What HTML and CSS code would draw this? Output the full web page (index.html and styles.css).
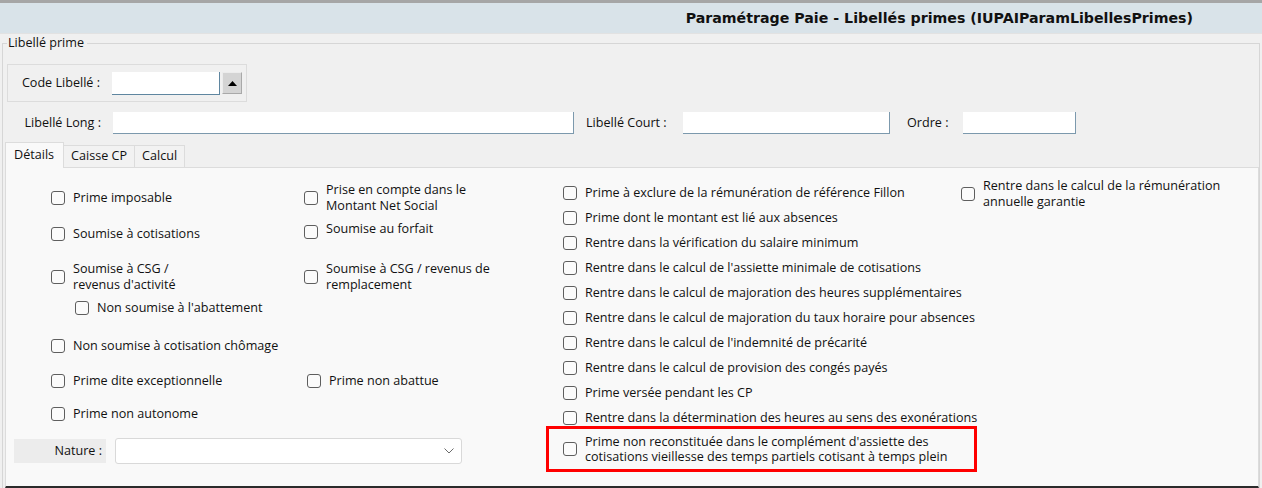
FILE: index.html
```html
<!DOCTYPE html>
<html lang="fr">
<head>
    <meta charset="UTF-8">
    <meta name="viewport" content="width=device-width, initial-scale=1.0">
    <title>Paramétrage Paie - Libellés primes</title>
    <link rel="stylesheet" href="styles.css">
</head>
<body>
    <div class="title-bar">
        <span class="title">Paramétrage Paie - Libellés primes (IUPAIParamLibellesPrimes)</span>
    </div>

    <fieldset class="group">
        <legend>Libellé prime</legend>

        <div class="code-box">
            <label class="lbl" for="code">Code Libellé :</label>
            <input type="text" id="code" class="field field-code">
            <button class="spin" type="button">
                <svg width="9" height="5" viewBox="0 0 9 5"><path d="M0 5 L4.5 0 L9 5 Z" fill="#000"/></svg>
            </button>
        </div>

        <div class="field-row">
            <label class="lbl" for="long">Libellé Long :</label>
            <input type="text" id="long" class="field field-long">
            <label class="lbl-court" for="court">Libellé Court :</label>
            <input type="text" id="court" class="field field-court">
            <label class="lbl-ordre" for="ordre">Ordre :</label>
            <input type="text" id="ordre" class="field field-ordre">
        </div>

        <div class="tabs">
            <div class="tab active">Détails</div>
            <div class="tab">Caisse CP</div>
            <div class="tab">Calcul</div>
        </div>

        <div class="panel">
            <!-- left block : two columns of options + nature -->
            <div class="left">
                <div class="opt-row row-a">
                    <div class="cell">
                        <label class="opt"><input type="checkbox" class="cb"><span>Prime imposable</span></label>
                    </div>
                    <div class="cell">
                        <label class="opt"><input type="checkbox" class="cb"><span>Prise en compte dans le<br>Montant Net Social</span></label>
                    </div>
                </div>

                <div class="opt-row row-b">
                    <div class="cell">
                        <label class="opt"><input type="checkbox" class="cb"><span>Soumise à cotisations</span></label>
                    </div>
                    <div class="cell">
                        <label class="opt opt-top"><input type="checkbox" class="cb"><span>Soumise au forfait</span></label>
                    </div>
                </div>

                <div class="opt-row row-c">
                    <div class="cell cell-stack">
                        <label class="opt"><input type="checkbox" class="cb"><span>Soumise à CSG /<br>revenus d'activité</span></label>
                        <label class="opt opt-sub"><input type="checkbox" class="cb"><span>Non soumise à l'abattement</span></label>
                    </div>
                    <div class="cell">
                        <label class="opt"><input type="checkbox" class="cb"><span>Soumise à CSG / revenus de<br>remplacement</span></label>
                    </div>
                </div>

                <div class="opt-row row-d">
                    <div class="cell">
                        <label class="opt"><input type="checkbox" class="cb"><span>Non soumise à cotisation chômage</span></label>
                    </div>
                </div>

                <div class="opt-row row-e">
                    <div class="cell">
                        <label class="opt"><input type="checkbox" class="cb"><span>Prime dite exceptionnelle</span></label>
                    </div>
                    <div class="cell cell-shift">
                        <label class="opt"><input type="checkbox" class="cb"><span>Prime non abattue</span></label>
                    </div>
                </div>

                <div class="opt-row row-f">
                    <div class="cell">
                        <label class="opt"><input type="checkbox" class="cb"><span>Prime non autonome</span></label>
                    </div>
                </div>

                <div class="nature">
                    <label class="nature-lbl" for="nature">Nature :</label>
                    <div class="select-wrap">
                        <select id="nature" class="select"><option></option></select>
                        <svg class="chevron" width="10" height="6" viewBox="0 0 10 6"><path d="M0.5 0.5 L5 5 L9.5 0.5" fill="none" stroke="#6b6b6b" stroke-width="1"/></svg>
                    </div>
                </div>
            </div>

            <!-- right block -->
            <div class="right">
                <div class="cols">
                    <div class="list">
                        <label class="opt"><input type="checkbox" class="cb"><span>Prime à exclure de la rémunération de référence Fillon</span></label>
                        <label class="opt"><input type="checkbox" class="cb"><span>Prime dont le montant est lié aux absences</span></label>
                        <label class="opt"><input type="checkbox" class="cb"><span>Rentre dans la vérification du salaire minimum</span></label>
                        <label class="opt"><input type="checkbox" class="cb"><span>Rentre dans le calcul de l'assiette minimale de cotisations</span></label>
                        <label class="opt"><input type="checkbox" class="cb"><span>Rentre dans le calcul de majoration des heures supplémentaires</span></label>
                        <label class="opt"><input type="checkbox" class="cb"><span>Rentre dans le calcul de majoration du taux horaire pour absences</span></label>
                        <label class="opt"><input type="checkbox" class="cb"><span>Rentre dans le calcul de l'indemnité de précarité</span></label>
                        <label class="opt"><input type="checkbox" class="cb"><span>Rentre dans le calcul de provision des congés payés</span></label>
                        <label class="opt"><input type="checkbox" class="cb"><span>Prime versée pendant les CP</span></label>
                        <label class="opt"><input type="checkbox" class="cb"><span>Rentre dans la détermination des heures au sens des exonérations</span></label>
                    </div>
                    <div class="extra">
                        <label class="opt"><input type="checkbox" class="cb"><span>Rentre dans le calcul de la rémunération<br>annuelle garantie</span></label>
                    </div>
                </div>
                <div class="highlight">
                    <label class="opt"><input type="checkbox" class="cb"><span>Prime non reconstituée dans le complément d'assiette des<br>cotisations vieillesse des temps partiels cotisant à temps plein</span></label>
                </div>
            </div>
        </div>
    </fieldset>
</body>
</html>
```

FILE: styles.css
```css
body {
    margin: 0;
    width: 1262px;
    height: 488px;
    overflow: hidden;
    background-color: #f0f0f0;
    font-family: 'Open Sans', 'Noto Sans', sans-serif;
    font-size: 12.6px;
    line-height: 16px;
    color: #111;
}

.title-bar {
    height: 30px;
    border-top: 3px solid #a6a6a6;
    border-bottom: 1px solid #e2e2e2;
    background-color: #d9e3e9;
    display: flex;
    align-items: center;
    justify-content: flex-end;
    padding-right: 69px;
}

.title {
    font-family: 'DejaVu Sans', Verdana, sans-serif;
    font-weight: bold;
    font-size: 14.2px;
    color: #111;
}

.group {
    margin: 1px 2px 0 2px;
    padding: 0;
    border: 1px solid #d6d6d6;
    border-bottom: none;
    min-width: 0;
}

.group legend {
    padding: 0 3px 0 1px;
    margin-left: 4px;
    line-height: 16px;
}

.code-box {
    display: flex;
    align-items: center;
    width: 238px;
    height: 36px;
    margin: 13px 0 0 4px;
    border: 1px solid #dcdcdc;
}

.lbl {
    width: 93px;
    text-align: right;
    margin-right: 12px;
    flex: none;
}

.code-box .lbl {
    width: 92px;
}

.field {
    height: 22px;
    padding: 0;
    border: none;
    border-right: 1px solid #7c99ad;
    border-bottom: 1px solid #7c99ad;
    background-color: #fff;
    box-sizing: border-box;
    flex: none;
}

.field-code {
    width: 108px;
    height: 23px;
    border-color: #5f86a0;
}

.spin {
    width: 20px;
    height: 22px;
    margin-left: 2px;
    padding: 0;
    border: 1px solid;
    border-color: #ececec #a9a9a9 #a9a9a9 #ececec;
    background-color: #d4d4d4;
    display: flex;
    align-items: center;
    justify-content: center;
}

.field-row {
    display: flex;
    align-items: center;
    margin-top: 10px;
    padding-left: 5px;
}

.field-long {
    width: 461px;
}

.lbl-court {
    width: 109px;
    padding-left: 12px;
    box-sizing: border-box;
    flex: none;
}

.field-court {
    width: 207px;
}

.lbl-ordre {
    width: 73px;
    padding-left: 17px;
    box-sizing: border-box;
    flex: none;
}

.field-ordre {
    width: 113px;
}

.tabs {
    display: flex;
    align-items: flex-end;
    margin: 8px 0 0 2px;
    height: 25px;
}

.tab {
    height: 22px;
    box-sizing: border-box;
    padding: 2px 7px 0 7px;
    border: 1px solid #dcdcdc;
    border-bottom: none;
    border-left: none;
    background-color: #f2f2f2;
}

.tab.active {
    height: 26px;
    margin-bottom: -1px;
    padding: 4px 9px 0 8px;
    border-left: 1px solid #dcdcdc;
    background-color: #f9f9f9;
    position: relative;
}

.panel {
    display: flex;
    margin-left: 2px;
    height: 318px;
    border: 1px solid #dcdcdc;
    border-bottom: 2px solid #2b2b2b;
    background-color: #f9f9f9;
}

/* options */

.opt {
    display: flex;
    align-items: center;
    gap: 8px;
    white-space: nowrap;
}

.cb {
    appearance: none;
    -webkit-appearance: none;
    width: 14px;
    height: 14px;
    margin: 0;
    flex: none;
    border: 1px solid #5e5e5e;
    border-radius: 3px;
    background-color: #fbfbfb;
}

.left {
    width: 532px;
    padding: 14px 0 0 8px;
    flex: none;
}

.opt-row {
    display: flex;
    align-items: center;
    padding-left: 37px;
}

.cell {
    width: 253px;
    flex: none;
}

.row-b {
    margin-top: 4px;
    height: 32px;
}

.opt-top {
    align-items: flex-start;
    margin-bottom: 8px;
}

.opt-top .cb {
    margin-top: 4px;
}

.row-c {
    margin-top: 11px;
    align-items: flex-start;
}

.cell-stack {
    display: flex;
    flex-direction: column;
}

.opt-sub {
    margin: 7px 0 0 24px;
}

.row-d {
    margin-top: 22px;
}

.row-e {
    margin-top: 19px;
}

.cell-shift {
    padding-left: 3px;
}

.row-f {
    margin-top: 17px;
}

.nature {
    display: flex;
    align-items: center;
    margin-top: 16px;
}

.nature-lbl {
    width: 92px;
    height: 24px;
    box-sizing: border-box;
    padding-right: 4px;
    display: flex;
    align-items: center;
    justify-content: flex-end;
    background-color: #ececec;
}

.select-wrap {
    position: relative;
    margin-left: 9px;
}

.select {
    appearance: none;
    -webkit-appearance: none;
    width: 347px;
    height: 26px;
    border: 1px solid #d9d9d9;
    border-radius: 3px;
    background-color: #fff;
    display: block;
}

.chevron {
    position: absolute;
    right: 8px;
    top: 10px;
}

.right {
    flex: none;
}

.cols {
    display: flex;
}

.list {
    width: 398px;
    padding: 17px 0 0 17px;
    display: flex;
    flex-direction: column;
    gap: 9px;
}

.extra {
    padding-top: 10px;
}

.highlight {
    width: 431px;
    height: 46px;
    box-sizing: border-box;
    border: 3px solid #ff0000;
    padding-left: 14px;
    display: flex;
    align-items: center;
    line-height: 15px;
}
```
